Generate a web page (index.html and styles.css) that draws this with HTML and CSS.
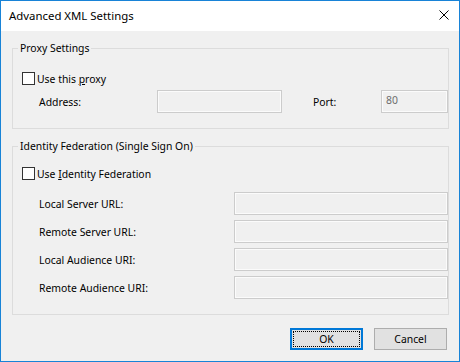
FILE: index.html
```html
<!DOCTYPE html>
<html lang="en">
<head>
    <meta charset="UTF-8">
    <meta name="viewport" content="width=device-width, initial-scale=1.0">
    <title>Advanced XML Settings</title>
    <link rel="stylesheet" href="styles.css">
</head>
<body>
    <div class="window">
        <header class="titlebar">
            <span class="title">Advanced XML Settings</span>
            <svg class="close" width="10" height="10" viewBox="0 0 10 10">
                <path d="M0.5 0.5 L9.5 9.5 M9.5 0.5 L0.5 9.5" stroke="#000" stroke-width="1" fill="none"/>
            </svg>
        </header>
        <main class="content">
            <fieldset class="group proxy">
                <legend>Proxy Settings</legend>
                <div class="check-row">
                    <span class="checkbox"></span>
                    <span>Use this <u>p</u>roxy</span>
                </div>
                <div class="proxy-row">
                    <span class="label address-label">Address:</span>
                    <div class="textbox address-box"></div>
                    <span class="label port-label">Port:</span>
                    <div class="textbox port-box">80</div>
                </div>
            </fieldset>

            <fieldset class="group identity">
                <legend>Identity Federation (Single Sign On)</legend>
                <div class="check-row">
                    <span class="checkbox"></span>
                    <span>Use <u>I</u>dentity Federation</span>
                </div>
                <div class="field-grid">
                    <span class="label">Local Server URL:</span>
                    <div class="textbox"></div>
                    <span class="label">Remote Server URL:</span>
                    <div class="textbox"></div>
                    <span class="label">Local Audience URI:</span>
                    <div class="textbox"></div>
                    <span class="label">Remote Audience URI:</span>
                    <div class="textbox"></div>
                </div>
            </fieldset>

            <div class="buttons">
                <button class="btn btn-default">OK</button>
                <button class="btn">Cancel</button>
            </div>
        </main>
    </div>
</body>
</html>
```

FILE: styles.css
```css
body {
    margin: 0;
    font-family: "Noto Sans", "Segoe UI", sans-serif;
    font-size: 10.4px;
    color: #000;
}
.window {
    width: 460px;
    height: 362px;
    box-sizing: border-box;
    border: 1px solid #1883d7;
    background-color: #f0f0f0;
    display: flex;
    flex-direction: column;
}
.titlebar {
    height: 30px;
    flex-shrink: 0;
    background-color: #fff;
    display: flex;
    align-items: center;
    padding: 0 10px 0 8px;
}
.title {
    font-size: 11.4px;
    line-height: 16px;
}
.close {
    margin-left: auto;
    align-self: flex-start;
    margin-top: 9px;
}
.content {
    padding: 9px 10px 0 11px;
}

/* group boxes */
.group {
    margin: 0;
    min-width: 0;
    border: 1px solid #dcdcdc;
    padding: 0 0 15px 9px;
}
.group legend {
    padding: 0 2px;
    margin-left: -4px;
    line-height: 17px;
}
.proxy {
    padding-top: 15px;
}
.identity {
    margin-top: 9px;
    padding-top: 12px;
}

.check-row {
    display: flex;
    align-items: center;
    height: 13px;
    line-height: 16px;
}
.checkbox {
    width: 13px;
    height: 13px;
    box-sizing: border-box;
    border: 1px solid #333;
    background-color: #fff;
    margin-right: 2px;
    flex-shrink: 0;
}

.label {
    line-height: 16px;
}
.textbox {
    height: 23px;
    box-sizing: border-box;
    border: 1px solid #cccccc;
    box-shadow: inset 0 0 0 1px #fbfbfb;
    background-color: #f0f0f0;
    color: #6d6d6d;
    padding: 1px 4px 0;
    line-height: 16px;
}

.proxy-row {
    display: flex;
    align-items: center;
    margin-top: 5px;
}
.address-label {
    margin-left: 17px;
    width: 118px;
}
.address-box {
    width: 125px;
}
.port-label {
    margin-left: 31px;
    width: 68px;
}
.port-box {
    width: 67px;
}

.field-grid {
    display: grid;
    grid-template-columns: 195px 214px;
    row-gap: 5px;
    align-items: center;
    margin-top: 12px;
    padding-left: 17px;
}

/* buttons */
.buttons {
    display: flex;
    justify-content: flex-end;
    gap: 11px;
    margin-top: 13px;
    padding-right: 2px;
}
.btn {
    width: 73px;
    height: 22px;
    padding: 0;
    font-family: inherit;
    font-size: 10.4px;
    color: #000;
    background-color: #e1e1e1;
    border: 1px solid #adadad;
}
.btn-default {
    border: 2px solid #0078d7;
    outline: 1px dotted #000;
    outline-offset: -4px;
}
```
